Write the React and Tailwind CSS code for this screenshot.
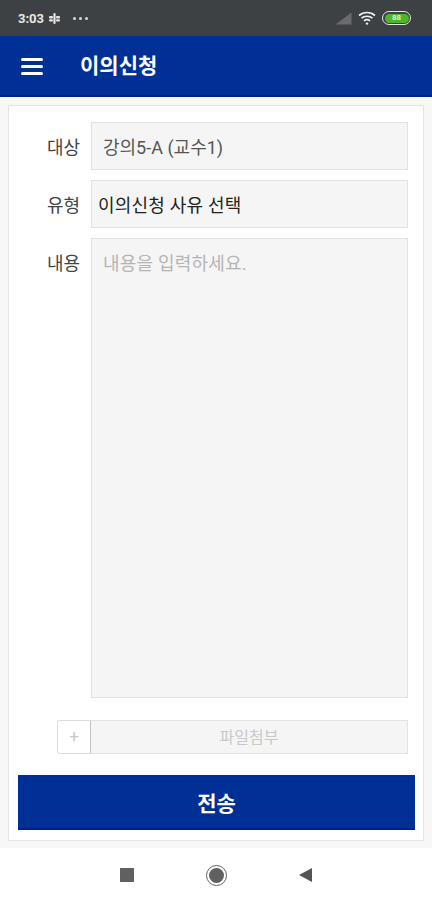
import React from 'react';

const KR = { fontFamily: '"Roboto", "Noto Sans CJK KR", sans-serif' };

const StatusBar = () => (
  <div className="h-9 bg-[#3e4144] flex items-center justify-between pl-[18px] pr-[21px] shrink-0">
    <div className="flex items-center">
      <span className="text-[13px] font-bold text-[#e8e8e8] leading-none">3:03</span>
      <svg width="13" height="13" viewBox="0 0 13 13" className="ml-[4px]" fill="#e4e4e4">
        <rect x="1" y="4" width="4" height="2.4" rx="1" />
        <rect x="8" y="4" width="4" height="2.4" rx="1" />
        <rect x="1" y="7.2" width="4" height="2.4" rx="1" />
        <rect x="8" y="7.2" width="4" height="2.4" rx="1" />
        <rect x="5.4" y="1" width="2.2" height="11" rx="1" />
      </svg>
      <div className="flex gap-[3px] ml-[12px]">
        <div className="w-[3px] h-[3px] rounded-full bg-[#d8d8d8]" />
        <div className="w-[3px] h-[3px] rounded-full bg-[#d8d8d8]" />
        <div className="w-[3px] h-[3px] rounded-full bg-[#d8d8d8]" />
      </div>
    </div>
    <div className="flex items-center">
      <svg width="17" height="13" viewBox="0 0 17 13">
        <path d="M0.5 12.5 L16.5 0.5 V12.5 Z" fill="#696b6d" />
      </svg>
      <svg width="18" height="15" viewBox="0 0 18 15" className="ml-[6px]" fill="none" stroke="#f0f0f0" strokeWidth="1.7">
        <path d="M1 4.5 C5.5 0.5 12.5 0.5 17 4.5" />
        <path d="M3.5 7.2 C6.5 4.6 11.5 4.6 14.5 7.2" />
        <path d="M6 9.8 C7.8 8.4 10.2 8.4 12 9.8" />
        <circle cx="9" cy="12.6" r="1.2" fill="#f0f0f0" stroke="none" />
      </svg>
      <div className="ml-[6px] w-[29px] h-[14px] rounded-full border-[1.5px] border-[#e6e6e6] p-[1.5px]">
        <div className="h-full w-full rounded-full bg-[#4fb52a] flex items-center justify-center text-[8px] font-bold text-[#d9f5cc] leading-none">
          88
        </div>
      </div>
    </div>
  </div>
);

const Header = () => (
  <div className="h-[61px] bg-[#002f96] border-b-2 border-[#00208a] pt-[2px] flex items-center shrink-0">
    <div className="ml-[21px] w-[22px] flex flex-col gap-[4px]">
      <div className="h-[3px] bg-white rounded-sm" />
      <div className="h-[3px] bg-white rounded-sm" />
      <div className="h-[3px] bg-white rounded-sm" />
    </div>
    <h1 className="ml-[37px] text-[21px] font-bold text-white leading-none">이의신청</h1>
  </div>
);

const Row = ({ label, children }) => (
  <div className="flex">
    <div className="w-[71px] h-12 text-right text-[18px] text-[#444] leading-[52px] shrink-0">{label}</div>
    <div className="ml-[11px] w-[317px]">{children}</div>
  </div>
);

const fieldClass = 'bg-[#f5f5f5] border border-[#e2e2e2] text-[18px] leading-[50px]';

const Form = () => (
  <div className="flex-1 bg-white border border-[#e4e4e4] mx-2 mt-2 mb-[7px] pt-[16px] flex flex-col">
    <div className="flex flex-col gap-[10px]">
      <Row label="대상">
        <div className={`${fieldClass} h-12 pl-[11px] text-[#555]`}>강의5-A (교수1)</div>
      </Row>
      <Row label="유형">
        <div className={`${fieldClass} h-12 pl-[6px] text-[#222] tracking-[0.2px]`}>이의신청 사유 선택</div>
      </Row>
      <Row label="내용">
        <div className={`${fieldClass} h-[460px] pl-[11px] text-[#b4b4b4] tracking-[0.2px]`}>내용을 입력하세요.</div>
      </Row>
    </div>
    <div className="flex mt-[22px] ml-[48px] w-[351px] h-[34px]">
      <div className="w-[34px] bg-white border border-[#dcdcdc] border-r-[#c4c4c4] rounded-l-[3px] flex items-center justify-center text-[17px] text-[#c8c8c8] shrink-0">
        +
      </div>
      <div className="flex-1 bg-[#f5f5f5] border border-[#e2e2e2] border-l-0 flex items-center justify-center pt-[1px] text-[16px] text-[#c9c9c9]">
        파일첨부
      </div>
    </div>
    <button className="mt-[21px] ml-[9px] w-[397px] h-[55px] bg-[#002f96] border-b-2 border-[#00208a] pt-[6px] text-white text-[21px] font-bold">
      전송
    </button>
  </div>
);

const NavBar = () => (
  <div className="h-[52px] bg-white flex items-center justify-center pt-[2px] shrink-0">
    <div className="w-[14px] h-[14px] bg-[#606060] mr-[72px]" />
    <div className="w-[21px] h-[21px] rounded-full border-[1.5px] border-[#606060] flex items-center justify-center mr-[72px]">
      <div className="w-[15px] h-[15px] rounded-full bg-[#606060]" />
    </div>
    <svg width="13" height="14" viewBox="0 0 13 14">
      <path d="M0 7 L13 0 V14 Z" fill="#555" />
    </svg>
  </div>
);

export default function App() {
  return (
    <div className="w-[432px] h-[900px] bg-[#f7f7f7] flex flex-col overflow-hidden" style={KR}>
      <StatusBar />
      <Header />
      <Form />
      <NavBar />
    </div>
  );
}
